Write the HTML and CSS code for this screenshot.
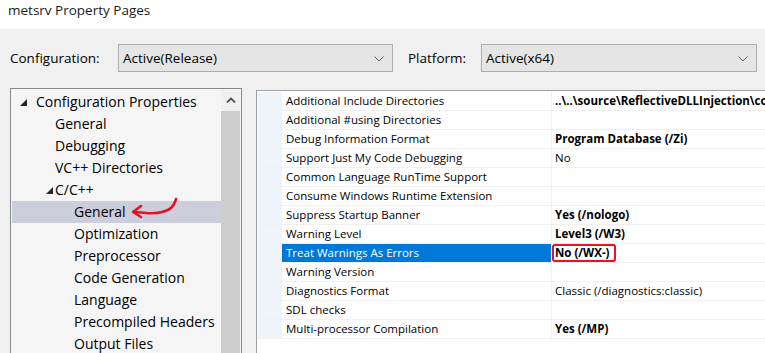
FILE: index.html
```html
<!DOCTYPE html>
<html>
<head>
<meta charset="utf-8">
<link rel="stylesheet" href="styles.css">
</head>
<body>
<div class="title">metsrv Property Pages</div>
<div class="main">
  <div class="toolbar">
    <span class="lbl lbl-conf">Configuration:</span>
    <div class="combo combo-conf"><span>Active(Release)</span><svg class="chev" width="10" height="6" viewBox="0 0 10 6"><path d="M0.5 0.5 L5 5 L9.5 0.5" fill="none" stroke="#606060" stroke-width="1"/></svg></div>
    <span class="lbl lbl-plat">Platform:</span>
    <div class="combo combo-plat"><span>Active(x64)</span><svg class="chev" width="10" height="6" viewBox="0 0 10 6"><path d="M0.5 0.5 L5 5 L9.5 0.5" fill="none" stroke="#606060" stroke-width="1"/></svg></div>
  </div>
  <div class="panes">
    <div class="tree">
      <div class="tree-list">
        <div class="node l1"><span class="tri"></span>Configuration Properties</div>
        <div class="node l2">General</div>
        <div class="node l2">Debugging</div>
        <div class="node l2">VC++ Directories</div>
        <div class="node l2"><span class="tri"></span>C/C++</div>
        <div class="node l3 sel">General
          <svg class="arrow" width="60" height="24" viewBox="0 0 60 24"><path d="M4 17 C14 17 22 20 32 17 C40 15 44 12 46 4" fill="none" stroke="#e81123" stroke-width="2.6" stroke-linecap="round"/><path d="M11 11 L3 17 L11 22" fill="none" stroke="#e81123" stroke-width="2.6" stroke-linecap="round" stroke-linejoin="round"/></svg>
        </div>
        <div class="node l3">Optimization</div>
        <div class="node l3">Preprocessor</div>
        <div class="node l3">Code Generation</div>
        <div class="node l3">Language</div>
        <div class="node l3">Precompiled Headers</div>
        <div class="node l3">Output Files</div>
      </div>
      <div class="vscroll">
        <div class="up"><svg width="10" height="6" viewBox="0 0 10 6"><path d="M1 5.5 L5 1.5 L9 5.5" fill="none" stroke="#505050" stroke-width="1.8"/></svg></div>
        <div class="thumb"></div>
      </div>
    </div>
    <div class="grid">
      <div class="row"><div class="gut"></div><div class="name">Additional Include Directories</div><div class="val b">..\..\source\ReflectiveDLLInjection\common</div></div>
      <div class="row"><div class="gut"></div><div class="name">Additional #using Directories</div><div class="val"></div></div>
      <div class="row"><div class="gut"></div><div class="name">Debug Information Format</div><div class="val b">Program Database (/Zi)</div></div>
      <div class="row"><div class="gut"></div><div class="name">Support Just My Code Debugging</div><div class="val">No</div></div>
      <div class="row"><div class="gut"></div><div class="name">Common Language RunTime Support</div><div class="val"></div></div>
      <div class="row"><div class="gut"></div><div class="name">Consume Windows Runtime Extension</div><div class="val"></div></div>
      <div class="row"><div class="gut"></div><div class="name">Suppress Startup Banner</div><div class="val b">Yes (/nologo)</div></div>
      <div class="row"><div class="gut"></div><div class="name">Warning Level</div><div class="val b">Level3 (/W3)</div></div>
      <div class="row active"><div class="gut"></div><div class="name">Treat Warnings As Errors</div><div class="val b"><span class="redbox">No (/WX-)</span></div></div>
      <div class="row"><div class="gut"></div><div class="name">Warning Version</div><div class="val"></div></div>
      <div class="row"><div class="gut"></div><div class="name">Diagnostics Format</div><div class="val">Classic (/diagnostics:classic)</div></div>
      <div class="row"><div class="gut"></div><div class="name">SDL checks</div><div class="val"></div></div>
      <div class="row"><div class="gut"></div><div class="name">Multi-processor Compilation</div><div class="val b">Yes (/MP)</div></div>
    </div>
  </div>
</div>
</body>
</html>
```
FILE: styles.css
```css
* { box-sizing: border-box; }
html, body { margin: 0; padding: 0; }
body {
  width: 765px;
  height: 353px;
  overflow: hidden;
  font-family: "Open Sans", "Noto Sans", sans-serif;
  color: #000;
  background: #f0f0f0;
}
.title {
  height: 29px;
  background: #fff;
  padding-left: 8px;
  font-size: 13.5px;
  line-height: 21px;
  color: #1a1a1a;
}
.main {
  background: #f0f0f0;
  padding: 15px 0 0 10px;
}
.toolbar {
  display: flex;
  align-items: center;
  height: 28px;
}
.lbl { font-size: 13.5px; color: #000; }
.lbl-conf { width: 108px; }
.lbl-plat { width: 73px; margin-left: 15px; }
.combo {
  height: 28px;
  background: #e5e5e5;
  border: 1px solid #adadad;
  display: flex;
  align-items: center;
  justify-content: space-between;
  padding: 0 8px 0 4px;
  font-size: 13.5px;
}
.combo-conf { width: 275px; }
.combo-plat { width: 276px; }
.chev { margin-top: 1px; }
.panes {
  display: flex;
  margin-top: 16px;
  align-items: flex-start;
}
.tree {
  flex: none;
  width: 232px;
  height: 300px;
  border: 1px solid #828790;
  background: #f5f5f5;
  display: flex;
}
.tree-list {
  flex: 1;
  padding-top: 2px;
  padding-left: 1px;
}
.node {
  position: relative;
  height: 22px;
  line-height: 22px;
  font-size: 14px;
  white-space: nowrap;
}
.node.l1 { padding-left: 24px; }
.node.l2 { padding-left: 43px; }
.node.l3 { padding-left: 62px; }
.node .tri {
  display: inline-block;
  width: 0; height: 0;
  border-left: 7px solid transparent;
  border-bottom: 7px solid #262626;
  vertical-align: 1px;
}
.node.l1 .tri { margin-left: -16px; margin-right: 9px; }
.node.l2 .tri { margin-left: -9px; margin-right: 2px; }
.node.sel { background: #cccedb; }
.arrow { position: absolute; left: 118px; top: -6px; }
.vscroll {
  flex: none;
  width: 19px;
  margin-right: 1px;
  display: flex;
  flex-direction: column;
  background: #f0f0f0;
}
.up { height: 22px; display: flex; align-items: center; justify-content: center; }
.thumb { flex: 1; background: #cdcdcd; }
.grid {
  margin-left: 14px;
  margin-top: 2px;
  flex: 1;
  min-width: 0;
  height: 300px;
  border-left: 1px solid #a0a0a0;
  border-top: 1px solid #a0a0a0;
  background: #fff;
  padding-top: 1px;
}
.row {
  display: flex;
  height: 19px;
  border-bottom: 1px solid #f0f0f0;
  font-size: 11.5px;
  line-height: 18px;
}
.gut { width: 25px; background: #eff3fa; flex: none; }
.name {
  width: 270px;
  flex: none;
  padding-left: 4px;
  border-right: 1px solid #f0f0f0;
  white-space: nowrap;
  overflow: hidden;
}
.val {
  flex: 1;
  padding-left: 3px;
  white-space: nowrap;
  overflow: hidden;
}
.val.b { font-weight: bold; }
.row.active .name { background: #0078d7; color: #fff; }
.redbox {
  display: inline-block;
  border: 2px solid #e81123;
  border-radius: 3px;
  padding: 0 4px 0 1px;
  margin-left: -3px;
  line-height: 14px;
}
```
